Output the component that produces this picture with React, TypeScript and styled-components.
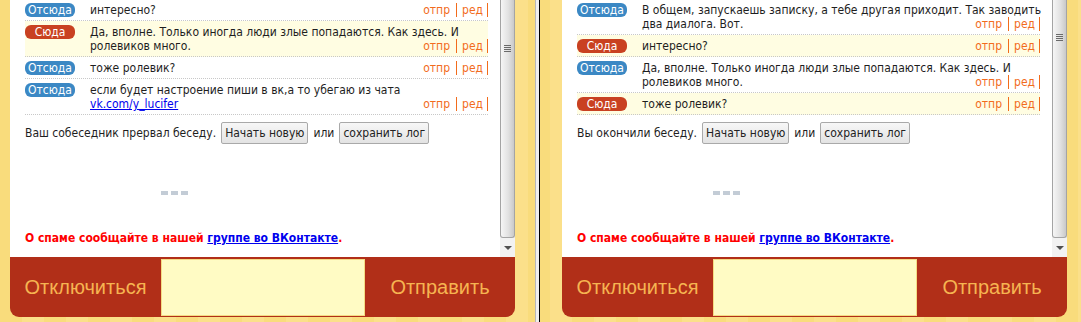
import React from "react";
import styled, { createGlobalStyle } from "styled-components";

const Global = createGlobalStyle`
    html, body {
        margin: 0;
        padding: 0;
        width: 1081px;
        height: 322px;
        overflow: hidden;
    }
`;

const Page = styled.div`
    display: flex;
    width: 1081px;
    height: 322px;
    background: repeating-linear-gradient(90deg, #f9dc7c 0 22px, #fbe08a 22px 44px);
    font-family: "DejaVu Sans Condensed", "DejaVu Sans", Verdana, sans-serif;
    font-size: 12px;
    color: #1e1e1e;
`;

const Panel = styled.div<{ $inset: number; $width: number }>`
    width: ${(p) => p.$width}px;
    padding-left: ${(p) => p.$inset}px;
    box-sizing: border-box;
    flex: none;
`;

const Divider = styled.div`
    width: 3px;
    flex: none;
    background: #efefef;
    border-left: 1px solid #b8b8b8;
    border-right: 1px solid #000;
`;

const ChatWindow = styled.div`
    width: 505px;
    height: 317px;
    display: flex;
    flex-direction: column;
`;

const Log = styled.div`
    height: 257px;
    display: flex;
    background: #fff;
`;

const LogContent = styled.div`
    flex: 1;
    overflow: hidden;
    padding: 0 12px 0 15px;
    display: flex;
    flex-direction: column;
`;

const Messages = styled.div`
    margin-top: -1px;
`;

const Row = styled.div<{ $mine: boolean }>`
    display: flex;
    padding: 4px 0 3px;
    line-height: 14px;
    border-bottom: 1px dotted #c8c8c8;
    background: ${(p) => (p.$mine ? "#fff" : "#fffde2")};
`;

const Badge = styled.span<{ $mine: boolean }>`
    flex: 0 0 50px;
    height: 14px;
    margin-right: 15px;
    border-radius: 6px;
    background: ${(p) => (p.$mine ? "#3b88c4" : "#c94121")};
    color: #fff;
    line-height: 14px;
    text-align: center;
`;

const Body = styled.div`
    flex: 1;
    min-width: 0;
    margin-right: -3px;
`;

const Actions = styled.span`
    float: right;
    margin: 0 3px 0 6px;
`;

const Action = styled.a`
    color: #f26c1c;
    text-decoration: none;
    padding: 0 5px 0 5px;
    border-right: 1px solid #f26c1c;
    &:first-child {
        padding-right: 6px;
    }
    &:last-child {
        padding-right: 4px;
    }
`;

const UserLink = styled.a`
    color: #0000ee;
    text-decoration: underline;
`;

const Status = styled.div`
    display: flex;
    align-items: center;
    gap: 5px;
    margin-top: 7px;
    height: 22px;
`;

const Button = styled.button`
    height: 22px;
    padding: 0 3px;
    font-family: inherit;
    font-size: 12px;
    color: #222;
    background: linear-gradient(#f7f7f7, #e3e3e3);
    border: 1px solid #a9a9a9;
    border-radius: 2px;
`;

const Loader = styled.div`
    display: flex;
    gap: 3px;
    margin: 47px 0 0 136px;
    span {
        width: 7px;
        height: 4px;
        background: #c3ccd6;
    }
`;

const Spam = styled.div`
    margin-top: 36px;
    font-weight: bold;
    color: #ff0000;
    line-height: 15px;
    a {
        color: #0000ee;
        text-decoration: underline;
    }
`;

const Scrollbar = styled.div`
    width: 15px;
    flex: none;
    display: flex;
    flex-direction: column;
    background: #f2f2f2;
`;

const Thumb = styled.div<{ $grip: number }>`
    height: 238px;
    box-sizing: border-box;
    border: 1px solid #a4a4a4;
    border-top: none;
    border-radius: 0 0 3px 3px;
    background: linear-gradient(90deg, #f6f6f6, #e2e2e2 55%, #c9c9c9);
    padding-top: ${(p) => p.$grip}px;
    display: flex;
    flex-direction: column;
    align-items: center;
    gap: 1px;
    i {
        width: 7px;
        height: 1px;
        background: #6a6a6a;
    }
`;

const Arrow = styled.div`
    flex: 1;
    display: flex;
    align-items: center;
    justify-content: center;
    &::after {
        content: "";
        border-left: 4px solid transparent;
        border-right: 4px solid transparent;
        border-top: 4px solid #505050;
    }
`;

const BottomBar = styled.div`
    flex: 1;
    display: flex;
    background: #b12f18;
    border-radius: 0 0 9px 9px;
    font-family: "Liberation Sans", Arial, sans-serif;
    font-size: 20px;
    color: #f6b451;
`;

const BarButton = styled.div<{ $width: number }>`
    width: ${(p) => p.$width}px;
    display: flex;
    align-items: center;
    justify-content: center;
`;

const Input = styled.div`
    width: 204px;
    margin: 2px 0 1px;
    background: #fffbc4;
    box-shadow: inset 0 0 0 1px #f4dc84;
`;

type Msg = { mine: boolean; text: React.ReactNode };

const Chat = ({ messages, status, grip }: { messages: Msg[]; status: string; grip: number }) => (
    <ChatWindow>
        <Log>
            <LogContent>
                <Messages>
                    {messages.map((m, i) => (
                        <Row key={i} $mine={m.mine}>
                            <Badge $mine={m.mine}>{m.mine ? "Отсюда" : "Сюда"}</Badge>
                            <Body>
                                {m.text}
                                <Actions>
                                    <Action>отпр</Action>
                                    <Action>ред</Action>
                                </Actions>
                            </Body>
                        </Row>
                    ))}
                </Messages>
                <Status>
                    {status}
                    <Button>Начать новую</Button>
                    или
                    <Button>сохранить лог</Button>
                </Status>
                <Loader>
                    <span />
                    <span />
                    <span />
                </Loader>
                <Spam>
                    О спаме сообщайте в нашей <a>группе во ВКонтакте</a>.
                </Spam>
            </LogContent>
            <Scrollbar>
                <Thumb $grip={grip}>
                    <i />
                    <i />
                    <i />
                    <i />
                </Thumb>
                <Arrow />
            </Scrollbar>
        </Log>
        <BottomBar>
            <BarButton $width={151}>Отключиться</BarButton>
            <Input />
            <BarButton $width={150}>Отправить</BarButton>
        </BottomBar>
    </ChatWindow>
);

const leftMessages: Msg[] = [
    { mine: true, text: "интересно?" },
    { mine: false, text: "Да, вполне. Только иногда люди злые попадаются. Как здесь. И ролевиков много." },
    { mine: true, text: "тоже ролевик?" },
    {
        mine: true,
        text: (
            <>
                если будет настроение пиши в вк,а то убегаю из чата <UserLink>vk.com/y_lucifer</UserLink>
            </>
        ),
    },
];

const rightMessages: Msg[] = [
    { mine: true, text: "В общем, запускаешь записку, а тебе другая приходит. Так заводить два диалога. Вот." },
    { mine: false, text: "интересно?" },
    { mine: true, text: "Да, вполне. Только иногда люди злые попадаются. Как здесь. И ролевиков много." },
    { mine: false, text: "тоже ролевик?" },
];

export default function App() {
    return (
        <>
            <Global />
            <Page>
                <Panel $inset={10} $width={535}>
                    <Chat messages={leftMessages} status="Ваш собеседник прервал беседу." grip={45} />
                </Panel>
                <Divider />
                <Panel $inset={22} $width={541}>
                    <Chat messages={rightMessages} status="Вы окончили беседу." grip={34} />
                </Panel>
            </Page>
        </>
    );
}
